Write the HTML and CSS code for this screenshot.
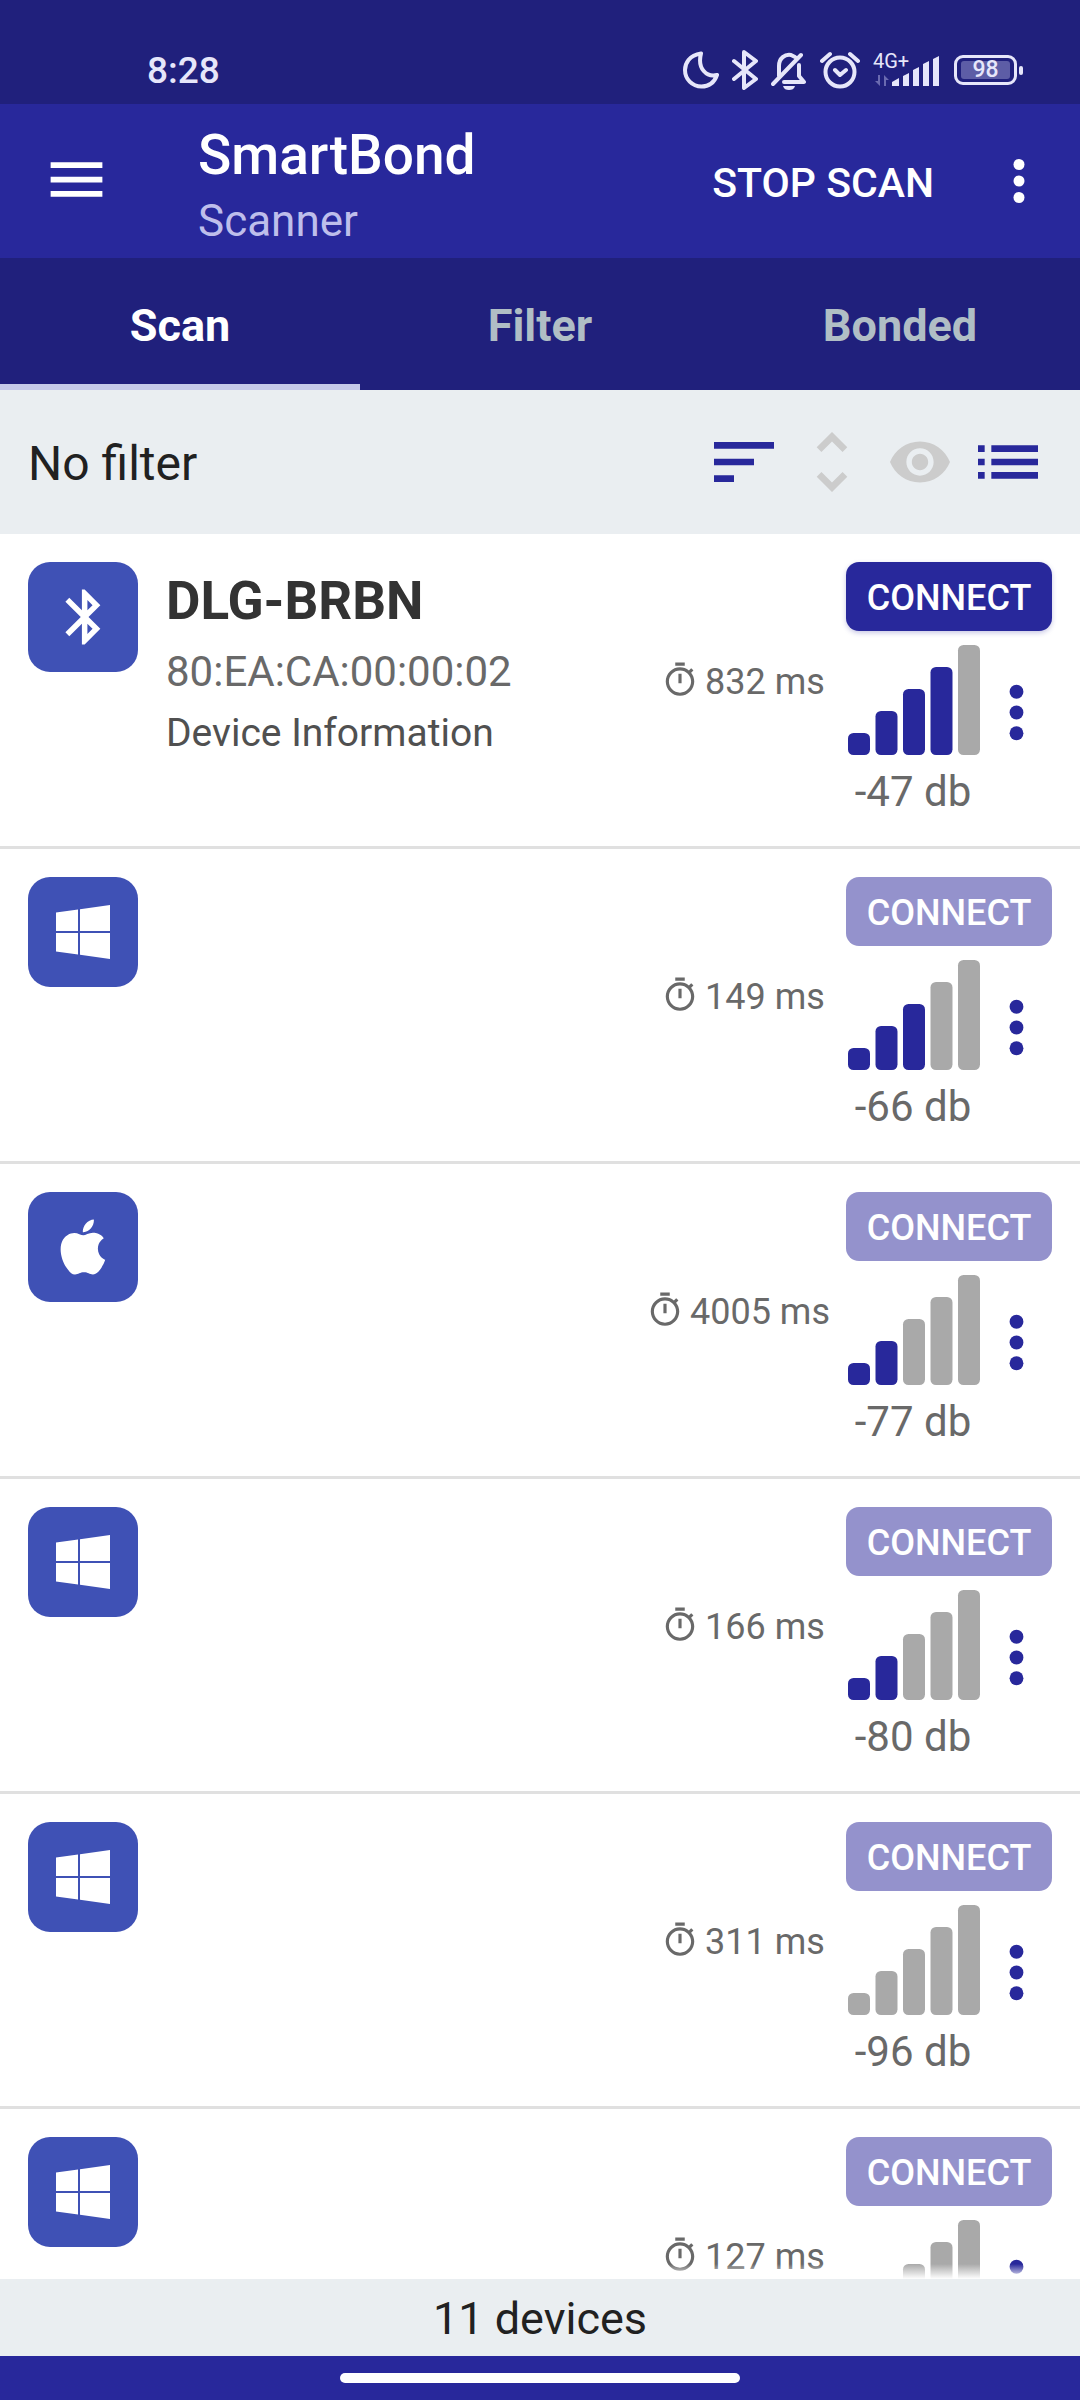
FILE: index.html
```html
<!DOCTYPE html>
<html lang="en">
<head>
<meta charset="utf-8">
<meta name="viewport" content="width=device-width, initial-scale=1">
<title>SmartBond Scanner</title>
<link rel="stylesheet" href="styles.css">
</head>
<body>
<svg class="sprite" aria-hidden="true">
  <symbol id="i-bluetooth" viewBox="-0.6 0 24 24"><path d="M17.71 7.71 12 2h-1v7.59L6.41 5 5 6.41 10.59 12 5 17.59 6.41 19 11 14.41V22h1l5.71-5.71-4.3-4.29 4.3-4.29zM13 5.83l1.88 1.88L13 9.59V5.83zm1.88 10.46L13 18.17v-3.76l1.88 1.88z"/></symbol>
  <symbol id="i-windows" viewBox="-6 -6 66 66"><path d="M0 7.5 22 4.6V26H0zM24 4.3 54 0v26H24zM0 28h22v21.4L0 46.5zM24 28h30v26l-30-4.3z"/></symbol>
  <symbol id="i-apple" viewBox="0 0 24 24"><path d="M18.71 19.5C17.88 20.74 17 21.95 15.66 21.97C14.32 22 13.89 21.18 12.37 21.18C10.84 21.18 10.37 21.95 9.1 22C7.79 22.05 6.8 20.68 5.96 19.47C4.25 17 2.94 12.45 4.7 9.39C5.57 7.87 7.13 6.91 8.82 6.88C10.1 6.86 11.32 7.75 12.11 7.75C12.89 7.75 14.37 6.68 15.92 6.84C16.57 6.87 18.39 7.1 19.56 8.82C19.47 8.88 17.39 10.1 17.41 12.63C17.44 15.65 20.06 16.66 20.09 16.67C20.06 16.74 19.67 18.11 18.71 19.5M13 3.5C13.73 2.67 14.94 2.04 15.94 2C16.07 3.17 15.6 4.35 14.9 5.19C14.21 6.04 13.07 6.7 11.95 6.61C11.8 5.46 12.36 4.26 13 3.5Z"/></symbol>
  <symbol id="i-timer" viewBox="0 0 24 24"><path d="M15 1H9v2h6V1zm-4 13h2V8h-2v6zm8.03-6.61 1.42-1.42c-.43-.51-.9-.99-1.41-1.41l-1.42 1.42C16.07 4.74 14.12 4 12 4c-4.97 0-9 4.03-9 9s4.02 9 9 9 9-4.03 9-9c0-2.12-.74-4.07-1.97-5.61zM12 20c-3.87 0-7-3.13-7-7s3.13-7 7-7 7 3.13 7 7-3.13 7-7 7z"/></symbol>
  <symbol id="i-more" viewBox="0 0 24 24"><circle cx="12" cy="6" r="2"/><circle cx="12" cy="12" r="2"/><circle cx="12" cy="18" r="2"/></symbol>
  <symbol id="i-signal" viewBox="0 0 48 40"><rect x="0" y="32" width="8" height="8" rx="2"/><rect x="10" y="24" width="8" height="16" rx="2"/><rect x="20" y="16" width="8" height="24" rx="2"/><rect x="30" y="8" width="8" height="32" rx="2"/><rect x="40" y="0" width="8" height="40" rx="2"/></symbol>
</svg>

<div class="app">
  <div class="status">
    <span class="clock">8:28</span>
    <div class="status-icons">
      <svg width="36" height="40" viewBox="0 0 36 40"><path d="M18 3.500C6 5 2 14 2 20c0 9 7 16.500 16.500 16.500 7.500 0 13-4.500 15.500-11.500-10 2.500-20-6-16-21.500z" class="line"/></svg>
      <svg width="26" height="40" viewBox="0 0 26 40"><path d="M2 11l22 18-12 9V2l12 9L2 29" class="line"/></svg>
      <svg width="36" height="40" viewBox="0 0 36 40"><path d="M2 34 30 5M8 26V16c0-8 6-12 12-11l4 2M28 15v11l5 6H13" class="line"/><path d="M12 36h12c-1 3-3 4-6 4s-5-1-6-4z" class="solid"/></svg>
      <svg width="40" height="40" viewBox="0 0 40 40"><circle cx="20" cy="22" r="14.500" class="line"/><path d="M2 11l8-7M38 11l-8-7M15 20l5 5 6-5" class="line"/></svg>
      <svg width="68" height="40" viewBox="0 0 68 40"><text x="0" y="18" class="net">4G+</text><path d="M2 31h3v-6h2v11zM16 30h-3v6h-2V25z" class="dim"/><path d="M19 36v-4l7-4v8zM30 36V26l6-3v13zM40 36V20l6-3v19zM50 36V14l6-3v25zM60 36V9l6-3v30z" class="solid"/></svg>
      <span class="battery"><span class="cell">98</span></span>
    </div>
  </div>

  <header class="appbar">
    <button class="icon-btn menu" type="button" aria-label="Open menu"><svg width="69" height="69" viewBox="0 0 24 24"><path d="M3 18h18v-2H3v2zm0-5h18v-2H3v2zm0-7v2h18V6H3z"/></svg></button>
    <div class="titles">
      <h1>SmartBond</h1>
      <p>Scanner</p>
    </div>
    <button class="stop" type="button">STOP SCAN</button>
    <button class="icon-btn" type="button" aria-label="More options"><svg width="66" height="66"><use href="#i-more"/></svg></button>
  </header>

  <nav class="tabs">
    <a href="#scan" class="tab active" aria-current="page">Scan</a>
    <a href="#filter" class="tab">Filter</a>
    <a href="#bonded" class="tab">Bonded</a>
  </nav>

  <div class="toolbar">
    <span class="filter-text">No filter</span>
    <button class="icon-btn" type="button" aria-label="Sort"><svg width="80" height="80" viewBox="0 0 24 24"><path d="M3 18h6v-2H3v2zM3 6v2h18V6H3zm0 7h12v-2H3v2z"/></svg></button>
    <button class="icon-btn off" type="button" aria-label="Expand all"><svg width="80" height="80" viewBox="0 0 24 24"><path d="M12 5.830 15.170 9l1.410-1.410L12 3 7.410 7.590 8.830 9 12 5.830zm0 12.340L8.830 15l-1.410 1.410L12 21l4.590-4.590L15.170 15 12 18.170z"/></svg></button>
    <button class="icon-btn off" type="button" aria-label="Show hidden"><svg width="80" height="80" viewBox="-2.670 -2.670 29.340 29.340"><path d="M12 4.500C7 4.500 2.730 7.610 1 12c1.730 4.390 6 7.500 11 7.500s9.270-3.110 11-7.500c-1.730-4.390-6-7.500-11-7.500zM12 17c-2.760 0-5-2.240-5-5s2.240-5 5-5 5 2.240 5 5-2.240 5-5 5zm0-8c-1.660 0-3 1.340-3 3s1.340 3 3 3 3-1.340 3-3-1.340-3-3-3z"/></svg></button>
    <button class="icon-btn" type="button" aria-label="List view"><svg width="80" height="80" viewBox="0 0 24 24"><path d="M3 13h2v-2H3v2zm0 4h2v-2H3v2zm0-8h2V7H3v2zm4 4h14v-2H7v2zm0 4h14v-2H7v2zM7 7v2h14V7H7z"/></svg></button>
  </div>

  <ul class="devices">
    <li class="device">
      <span class="badge"><svg><use href="#i-bluetooth"/></svg></span>
      <div class="info">
        <h2>DLG-BRBN</h2>
        <p class="address">80:EA:CA:00:00:02</p>
        <p class="kind">Device Information</p>
      </div>
      <div class="interval"><svg><use href="#i-timer"/></svg><span>832 ms</span></div>
      <div class="side">
        <button class="connect" type="button">CONNECT</button>
        <div class="signal"><svg class="bars" viewBox="0 0 48 40" role="img" aria-label="Signal 4 of 5"><rect x="0" y="32" width="8" height="8" rx="2" class="on"/><rect x="10" y="24" width="8" height="16" rx="2" class="on"/><rect x="20" y="16" width="8" height="24" rx="2" class="on"/><rect x="30" y="8" width="8" height="32" rx="2" class="on"/><rect x="40" y="0" width="8" height="40" rx="2"/></svg><span>-47 db</span></div>
        <button class="icon-btn more" type="button" aria-label="Device options"><svg><use href="#i-more"/></svg></button>
      </div>
    </li>
    <li class="device">
      <span class="badge"><svg><use href="#i-windows"/></svg></span>
      <div class="info"></div>
      <div class="interval"><svg><use href="#i-timer"/></svg><span>149 ms</span></div>
      <div class="side">
        <button class="connect" type="button" disabled>CONNECT</button>
        <div class="signal"><svg class="bars" viewBox="0 0 48 40" role="img" aria-label="Signal 3 of 5"><rect x="0" y="32" width="8" height="8" rx="2" class="on"/><rect x="10" y="24" width="8" height="16" rx="2" class="on"/><rect x="20" y="16" width="8" height="24" rx="2" class="on"/><rect x="30" y="8" width="8" height="32" rx="2"/><rect x="40" y="0" width="8" height="40" rx="2"/></svg><span>-66 db</span></div>
        <button class="icon-btn more" type="button" aria-label="Device options"><svg><use href="#i-more"/></svg></button>
      </div>
    </li>
    <li class="device">
      <span class="badge"><svg><use href="#i-apple"/></svg></span>
      <div class="info"></div>
      <div class="interval"><svg><use href="#i-timer"/></svg><span>4005 ms</span></div>
      <div class="side">
        <button class="connect" type="button" disabled>CONNECT</button>
        <div class="signal"><svg class="bars" viewBox="0 0 48 40" role="img" aria-label="Signal 2 of 5"><rect x="0" y="32" width="8" height="8" rx="2" class="on"/><rect x="10" y="24" width="8" height="16" rx="2" class="on"/><rect x="20" y="16" width="8" height="24" rx="2"/><rect x="30" y="8" width="8" height="32" rx="2"/><rect x="40" y="0" width="8" height="40" rx="2"/></svg><span>-77 db</span></div>
        <button class="icon-btn more" type="button" aria-label="Device options"><svg><use href="#i-more"/></svg></button>
      </div>
    </li>
    <li class="device">
      <span class="badge"><svg><use href="#i-windows"/></svg></span>
      <div class="info"></div>
      <div class="interval"><svg><use href="#i-timer"/></svg><span>166 ms</span></div>
      <div class="side">
        <button class="connect" type="button" disabled>CONNECT</button>
        <div class="signal"><svg class="bars" viewBox="0 0 48 40" role="img" aria-label="Signal 2 of 5"><rect x="0" y="32" width="8" height="8" rx="2" class="on"/><rect x="10" y="24" width="8" height="16" rx="2" class="on"/><rect x="20" y="16" width="8" height="24" rx="2"/><rect x="30" y="8" width="8" height="32" rx="2"/><rect x="40" y="0" width="8" height="40" rx="2"/></svg><span>-80 db</span></div>
        <button class="icon-btn more" type="button" aria-label="Device options"><svg><use href="#i-more"/></svg></button>
      </div>
    </li>
    <li class="device">
      <span class="badge"><svg><use href="#i-windows"/></svg></span>
      <div class="info"></div>
      <div class="interval"><svg><use href="#i-timer"/></svg><span>311 ms</span></div>
      <div class="side">
        <button class="connect" type="button" disabled>CONNECT</button>
        <div class="signal"><svg class="bars" role="img" aria-label="Signal 0 of 5"><use href="#i-signal"/></svg><span>-96 db</span></div>
        <button class="icon-btn more" type="button" aria-label="Device options"><svg><use href="#i-more"/></svg></button>
      </div>
    </li>
    <li class="device">
      <span class="badge"><svg><use href="#i-windows"/></svg></span>
      <div class="info"></div>
      <div class="interval"><svg><use href="#i-timer"/></svg><span>127 ms</span></div>
      <div class="side">
        <button class="connect" type="button" disabled>CONNECT</button>
        <div class="signal"><svg class="bars" role="img" aria-label="Signal 0 of 5"><use href="#i-signal"/></svg></div>
        <button class="icon-btn more" type="button" aria-label="Device options"><svg><use href="#i-more"/></svg></button>
      </div>
    </li>
  </ul>

  <footer class="count">11 devices</footer>
  <div class="gesture"><span class="pill"></span></div>
</div>
</body>
</html>
```
FILE: styles.css
```css
:root {
  --primary: #28289b;
  --primary-dark: #20207c;
  --panel: #eaeef1;
  --badge: #3f51b5;
}

* { box-sizing: border-box; }

body {
  margin: 0;
  background: #fff;
  font-family: Roboto, sans-serif;
}

h1, h2, p, ul { margin: 0; padding: 0; }

button {
  border: 0;
  padding: 0;
  background: none;
  font-family: inherit;
}

svg { display: block; flex: none; }

.sprite { display: none; }

.app {
  height: 100vh;
  display: flex;
  flex-direction: column;
}

.app > * { flex: none; }

/* status bar */
.status {
  display: flex;
  align-items: flex-start;
  justify-content: space-between;
  padding: 50px 63px 12px 147px;
  background: var(--primary-dark);
  color: #e6e6fa;
}

.clock {
  font-size: 37px;
  line-height: 42px;
  font-weight: 500;
}

.status-icons {
  display: flex;
  align-items: center;
  gap: 13px;
}

.line {
  fill: none;
  stroke: currentColor;
  stroke-width: 4;
  stroke-linecap: round;
  stroke-linejoin: round;
}

.solid { fill: currentColor; }
.dim { fill: #6a6ab0; }
.net { font-size: 20px; fill: currentColor; }

.battery {
  position: relative;
  padding: 3px 4px;
  border: 3px solid currentColor;
  border-radius: 9px;
}

.battery::after {
  content: "";
  position: absolute;
  left: 100%;
  top: 8px;
  width: 4px;
  height: 9px;
  margin-left: 5px;
  border-radius: 2px;
  background: currentColor;
}

.cell {
  display: block;
  width: 49px;
  border-radius: 3px;
  background: #5d5da6;
  font-size: 23px;
  line-height: 18px;
  font-weight: 500;
  text-align: center;
}

/* app bar */
.icon-btn {
  display: flex;
  align-items: center;
  justify-content: center;
  color: var(--primary);
}

.icon-btn svg { fill: currentColor; }
.icon-btn.off { color: #ccc; }

.appbar {
  display: flex;
  align-items: center;
  padding: 0 28px 0 42px;
  background: var(--primary);
  color: #fff;
}

.appbar .icon-btn { color: #fff; }
.appbar .menu { padding-bottom: 4px; }

.titles {
  flex: 1;
  display: flex;
  flex-direction: column;
  gap: 8px;
  padding: 19px 0 11px 87px;
}

h1 {
  font-size: 55px;
  line-height: 64px;
  font-weight: 500;
}

.titles p {
  font-size: 44px;
  line-height: 52px;
  color: #bebeeb;
}

.stop {
  margin-right: 52px;
  padding-top: 3px;
  color: #fff;
  font-size: 41px;
  line-height: 48px;
  font-weight: 500;
}

/* tabs */
.tabs {
  display: grid;
  grid-template-columns: repeat(3, 1fr);
  background: var(--primary-dark);
}

.tab {
  padding: 42px 0 32px;
  border-bottom: 6px solid transparent;
  color: #b0bec5;
  font-size: 45px;
  line-height: 52px;
  font-weight: 700;
  text-align: center;
  text-decoration: none;
}

.tab.active {
  color: #fff;
  border-color: #c5cae9;
}

/* toolbar */
.toolbar {
  display: flex;
  align-items: center;
  gap: 8px;
  padding: 32px 32px 32px 28px;
  background: var(--panel);
}

.filter-text {
  flex: 1;
  padding-top: 3px;
  color: #212121;
  font-size: 48px;
  line-height: 56px;
}

/* device list */
.devices {
  position: relative;
  flex: 1;
  min-height: 0;
  overflow: hidden;
  list-style: none;
}

.devices::after {
  content: "";
  position: absolute;
  left: 0;
  right: 0;
  bottom: 0;
  height: 15px;
  background: linear-gradient(rgba(255, 255, 255, 0), #fff);
}

.device {
  display: flex;
  align-items: flex-start;
  padding: 28px 28px 30px;
  border-bottom: 3px solid #e0e0e0;
}

.badge {
  display: flex;
  padding: 22px;
  border-radius: 22px;
  background: var(--badge);
}

.badge svg {
  width: 66px;
  height: 66px;
  fill: #fff;
}

.info {
  flex: 1;
  display: flex;
  flex-direction: column;
  gap: 15px;
  padding: 7px 0 0 28px;
}

h2 {
  color: #333;
  font-size: 53px;
  line-height: 64px;
  font-weight: 700;
}

.address {
  color: #696969;
  font-size: 42px;
  line-height: 48px;
}

.kind {
  color: #505050;
  font-size: 39px;
  line-height: 44px;
}

.interval {
  display: flex;
  justify-content: center;
  gap: 6px;
  min-width: 174px;
  margin: 99px 16px 0 0;
  color: #696969;
  font-size: 36px;
  line-height: 42px;
}

.interval svg {
  width: 38px;
  height: 38px;
  fill: currentColor;
}

.side {
  display: grid;
  grid-template-columns: 134px 72px;
  row-gap: 14px;
}

.connect {
  grid-column: 1 / 3;
  padding: 14px 0 11px;
  border-radius: 13px;
  background: var(--primary);
  box-shadow: 0 2px 5px rgba(40, 40, 155, 0.25);
  color: #fff;
  font-size: 36px;
  line-height: 44px;
  font-weight: 500;
}

.connect:disabled {
  background: #9492cc;
  box-shadow: none;
}

.signal {
  display: flex;
  flex-direction: column;
  align-items: flex-end;
  gap: 13px;
}

.bars {
  width: 132px;
  height: 110px;
  fill: #a9a9a9;
}

.bars .on { fill: var(--primary); }

.signal span {
  align-self: stretch;
  color: #696969;
  font-size: 42px;
  line-height: 48px;
  text-align: center;
}

.more {
  align-self: start;
  padding-top: 26px;
}

.more svg {
  width: 83px;
  height: 83px;
}

/* footer */
.count {
  padding: 12px 0 9px;
  background: var(--panel);
  color: #212121;
  font-size: 45px;
  line-height: 56px;
  text-align: center;
}

.gesture {
  display: flex;
  justify-content: center;
  padding: 17px 0;
  background: var(--primary);
}

.pill {
  width: 37%;
  height: 10px;
  border-radius: 5px;
  background: #fff;
}
```
